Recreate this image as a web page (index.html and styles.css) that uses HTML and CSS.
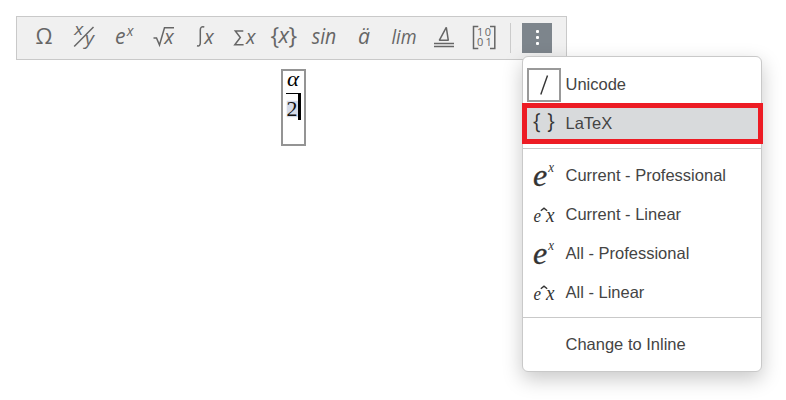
FILE: index.html
```html
<!DOCTYPE html>
<html lang="en">
<head>
<meta charset="utf-8">
<title>Equation editor</title>
<link rel="stylesheet" href="styles.css">
</head>
<body>
<div class="toolbar">
  <svg class="tool" viewBox="0 0 40 42"><text x="11.5" y="27" font-size="21" textLength="17" lengthAdjust="spacingAndGlyphs">Ω</text></svg>
  <svg class="tool" viewBox="0 0 40 42"><g class="it"><text x="10.2" y="17.8" font-size="16" textLength="9" lengthAdjust="spacingAndGlyphs">x</text><text x="21" y="27.8" font-size="19" textLength="9" lengthAdjust="spacingAndGlyphs">y</text></g><path d="M10.200 29.500 29.500 10"/></svg>
  <svg class="tool" viewBox="0 0 40 42"><g class="it"><text x="11" y="27" font-size="22" textLength="10.5" lengthAdjust="spacingAndGlyphs">e</text><text x="22.800" y="19" font-size="14">x</text></g></svg>
  <svg class="tool" viewBox="0 0 40 42"><path d="M9.500 21h3l3 7 5-17.200H30"/><text class="it" x="20.200" y="26.500" font-size="20" textLength="9.500" lengthAdjust="spacingAndGlyphs">x</text></svg>
  <svg class="tool" viewBox="0 0 40 42"><path d="M13 28.800q3.300.8 3.300-3V13q0-4 4-3"/><text class="it" x="20.200" y="26.500" font-size="20" textLength="9.500" lengthAdjust="spacingAndGlyphs">x</text></svg>
  <svg class="tool" viewBox="0 0 40 42"><path d="M19.300 14h-8l5 6.500-5.500 7.300h8.800"/><text class="it" x="22" y="26.500" font-size="20" textLength="9.500" lengthAdjust="spacingAndGlyphs">x</text></svg>
  <svg class="tool" viewBox="0 0 40 42"><text x="6.500" y="27" font-size="23">{</text><text class="it" x="14.500" y="26" font-size="22" textLength="10.500" lengthAdjust="spacingAndGlyphs">x</text><text x="24.500" y="27" font-size="23">}</text></svg>
  <svg class="tool" viewBox="0 0 40 42"><text class="it" x="7.800" y="27" font-size="22" textLength="24.500" lengthAdjust="spacingAndGlyphs">sin</text></svg>
  <svg class="tool" viewBox="0 0 40 42"><text class="it" x="14" y="27" font-size="21" textLength="12" lengthAdjust="spacingAndGlyphs">ä</text></svg>
  <svg class="tool" viewBox="0 0 40 42"><text class="it" x="7.500" y="27" font-size="20.500" textLength="25" lengthAdjust="spacingAndGlyphs">lim</text></svg>
  <svg class="tool" viewBox="0 0 40 42"><path stroke-linejoin="bevel" d="M15.300 23.300 22.300 10.300 24.300 23.300ZM10 26.500h20M10 29.500h20"/></svg>
  <svg class="tool" viewBox="0 0 40 42"><path d="M14.300 9.500H9.500v22h4.800M26 9.500h4.800v22H26"/><g class="digits"><text x="13" y="19">1</text><text x="20.800" y="19">0</text><text x="13" y="29">0</text><text x="21.500" y="29">1</text></g></svg>
  <span class="divider"></span>
  <button class="more" aria-label="More options"><span></span><span></span><span></span></button>
</div>

<div class="equation">
  <svg viewBox="0 0 21 73"><rect class="selection" x="3.700" y="29.700" width="11.300" height="16.500"/><text class="alpha" x="4" y="15" textLength="12" lengthAdjust="spacingAndGlyphs">α</text><path d="M3 22.500h15"/><text class="two" x="3.500" y="45">2</text><path class="caret" d="M16.500 23v26"/></svg>
</div>

<div class="menu">
  <div class="item"><span class="icon boxed"><svg viewBox="0 0 34 34"><path d="M13.800 26.500 20.500 7.500"/></svg></span>Unicode</div>
  <div class="item selected"><span class="icon"><svg viewBox="0 0 34 34"><text class="brace" x="6" y="22" textLength="7.500" lengthAdjust="spacingAndGlyphs">{</text><text class="brace" x="20.300" y="22" textLength="7.500" lengthAdjust="spacingAndGlyphs">}</text></svg></span>LaTeX</div>
  <hr>
  <div class="item"><span class="icon"><svg viewBox="0 0 34 34"><text class="base" x="6" y="26.500">e</text><text x="21.300" y="13" font-size="15" textLength="5.800" lengthAdjust="spacingAndGlyphs">x</text></svg></span>Current - Professional</div>
  <div class="item"><span class="icon"><svg viewBox="0 0 34 34"><text x="6.500" y="24" font-size="19" textLength="7.500" lengthAdjust="spacingAndGlyphs">e</text><path class="hat" d="M13.800 12.800 17 10.200 20.200 12.800"/><text x="19" y="24" font-size="20" textLength="8.500" lengthAdjust="spacingAndGlyphs">x</text></svg></span>Current - Linear</div>
  <div class="item"><span class="icon"><svg viewBox="0 0 34 34"><text class="base" x="6" y="26.500">e</text><text x="21.300" y="13" font-size="15" textLength="5.800" lengthAdjust="spacingAndGlyphs">x</text></svg></span>All - Professional</div>
  <div class="item"><span class="icon"><svg viewBox="0 0 34 34"><text x="6.500" y="24" font-size="19" textLength="7.500" lengthAdjust="spacingAndGlyphs">e</text><path class="hat" d="M13.800 12.800 17 10.200 20.200 12.800"/><text x="19" y="24" font-size="20" textLength="8.500" lengthAdjust="spacingAndGlyphs">x</text></svg></span>All - Linear</div>
  <hr>
  <div class="item"><span class="icon"></span>Change to Inline</div>
</div>
</body>
</html>
```

FILE: styles.css
```css
* { box-sizing: border-box; }
body {
  margin: 0;
  padding: 16px;
  height: 400px;
  overflow: hidden;
  background: #fff;
  font-family: "Liberation Sans", Arial, sans-serif;
}
.toolbar {
  display: flex;
  align-items: center;
  width: 551px;
  height: 44px;
  padding-left: 7px;
  background: #f0f0f0;
  border: 1px solid #c9c9c9;
}
.tool {
  width: 40px;
  height: 42px;
  flex: none;
  fill: #666;
  font-family: "Open Sans", sans-serif;
}
.tool path { fill: none; stroke: #666; stroke-width: 1.5; }
.it { font-style: italic; }
.digits { font-size: 11px; }
.divider { width: 1px; height: 30px; margin: 0 11px 0 6px; background: #cbcbcb; }
.more {
  display: flex;
  flex-direction: column;
  align-items: center;
  justify-content: center;
  gap: 3px;
  width: 30px;
  height: 30px;
  padding: 0 0 1px;
  border: 0;
  background: #7d858c;
}
.more span { width: 3px; height: 3px; border-radius: 1px; background: #fff; }
.equation {
  width: 25px;
  height: 77px;
  margin: 9px 0 0 265px;
  border: 2px solid #949494;
}
.equation svg { display: block; width: 21px; height: 73px; overflow: visible; }
.equation path { stroke: #000; stroke-width: 1; }
.equation .caret { stroke-width: 3; }
.selection { fill: #d6dbe8; }
.alpha { font: italic 21px "Liberation Serif", serif; }
.two { font: 22px "Liberation Serif", serif; fill: #111; }
.menu {
  position: absolute;
  left: 522px;
  top: 56px;
  width: 240px;
  height: 316px;
  padding: 8px 0 7px;
  background: #fff;
  border: 1px solid #c9c9c9;
  border-radius: 6px;
  box-shadow: 0 7px 20px rgba(0, 0, 0, .22);
}
.item {
  display: flex;
  align-items: center;
  height: 39px;
  padding-left: 4px;
  color: #444;
  font-size: 16.5px;
  white-space: pre;
}
.icon { width: 34px; height: 34px; margin-right: 4.5px; }
.icon svg { display: block; width: 34px; height: 34px; overflow: visible; fill: #333; font-family: "Liberation Serif", serif; font-style: italic; }
.icon path { fill: none; stroke: #333; stroke-width: 1.4; }
.base { font-size: 32px; stroke: #333; stroke-width: .3px; }
.boxed { border: 2px solid #999; }
.boxed svg { margin: -2px; }
.icon .brace { font: 22px "Open Sans", sans-serif; }
.selected { position: relative; background: #d8dadc; }
.selected::after {
  content: "";
  position: absolute;
  inset: -1px -2px -1px -1px;
  border: 5px solid #ed1c24;
}
hr { height: 1px; margin: 5px 0 7px; border: 0; background: #c9c9c9; }
```
